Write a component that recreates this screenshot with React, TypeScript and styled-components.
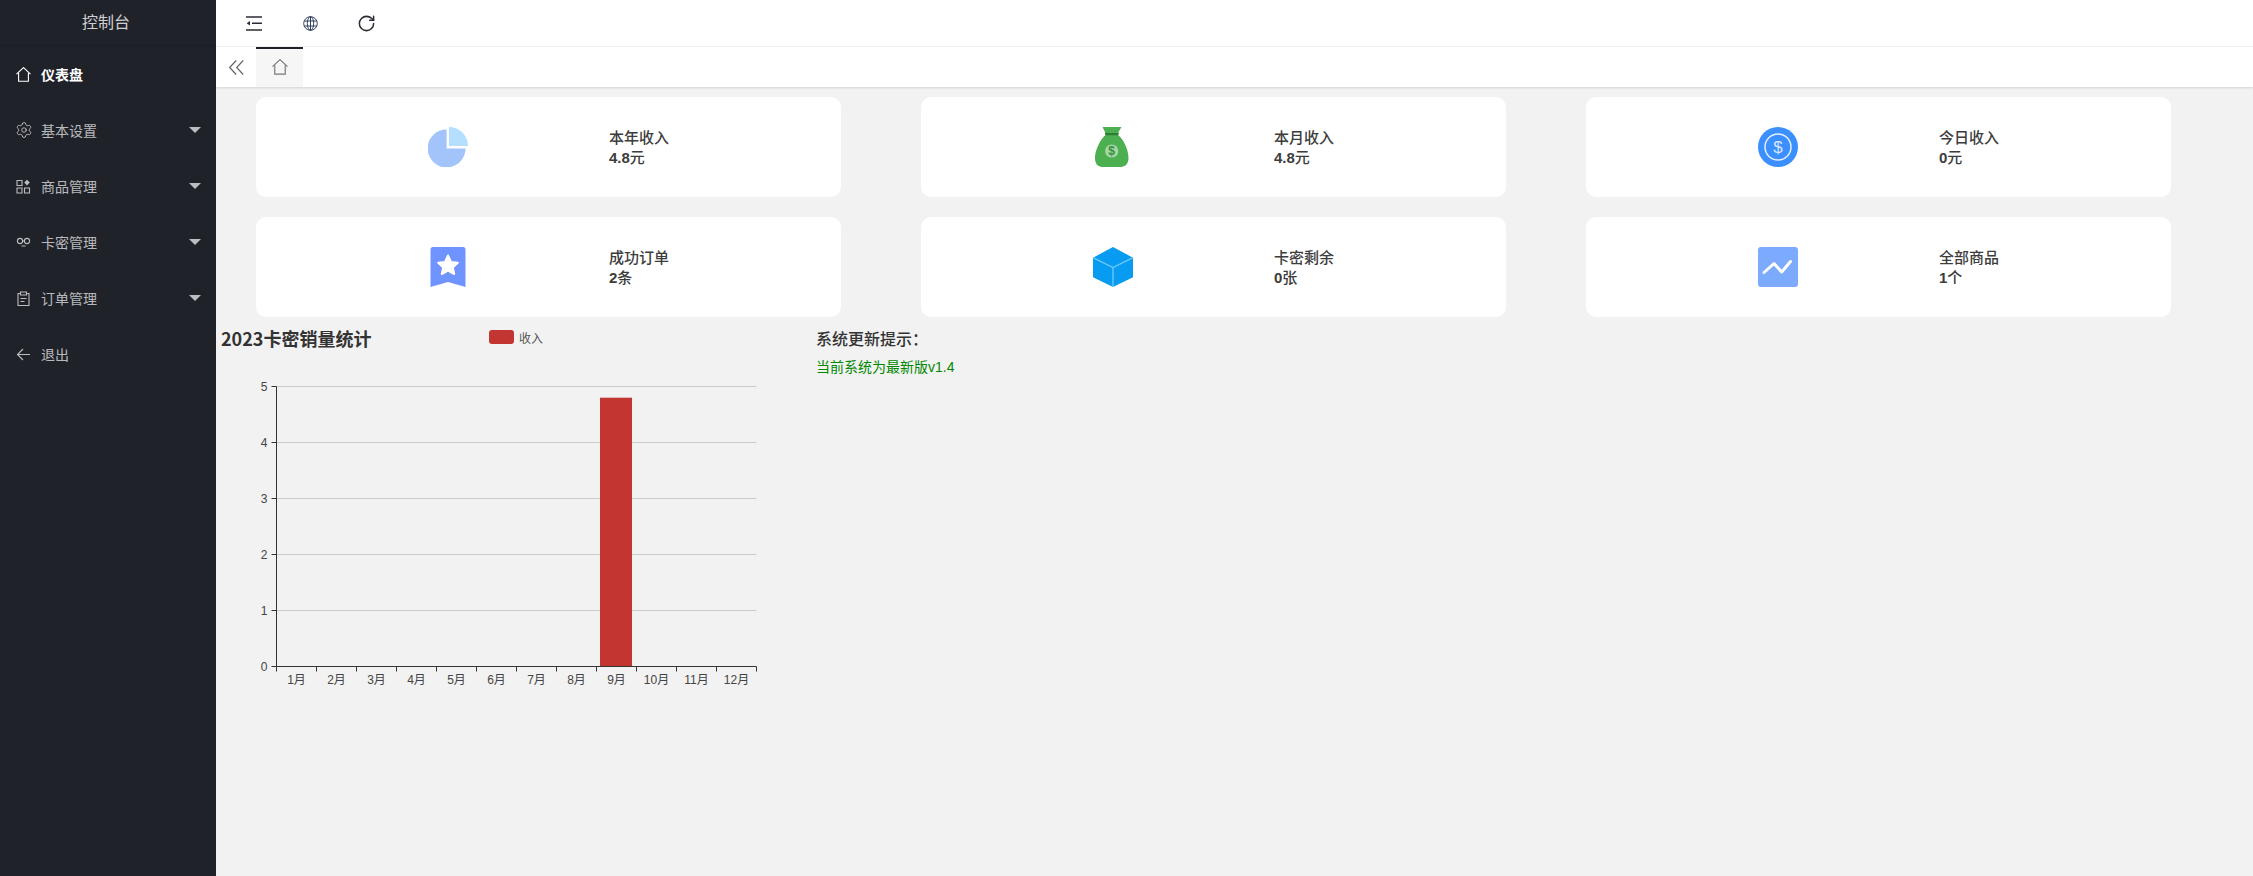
import React from 'react';
import styled, { createGlobalStyle } from 'styled-components';
import { RotateCw, Settings } from 'lucide-react';

const GlobalStyle = createGlobalStyle`
  html, body {
    margin: 0;
    padding: 0;
    height: 100%;
    overflow: hidden;
    background: #f2f2f2;
    font-family: "Liberation Sans", "Noto Sans CJK SC", sans-serif;
  }
`;

const Shell = styled.div`
  display: flex;
  height: 100vh;
`;

const Side = styled.aside`
  flex: 0 0 216px;
  background: #20222a;
`;

const Logo = styled.div`
  height: 46px;
  padding: 0 4px 3px 0;
  box-sizing: border-box;
  border-bottom: 1px solid #1c1e25;
  display: flex;
  align-items: center;
  justify-content: center;
  color: rgba(255, 255, 255, 0.8);
  font-size: 16px;
`;

const Menu = styled.nav`
  display: flex;
  flex-direction: column;
`;

const MenuItem = styled.a<{ $active?: boolean }>`
  height: 56px;
  display: flex;
  align-items: center;
  gap: 10px;
  padding: 0 15px 0 16px;
  color: ${(p) => (p.$active ? '#fff' : 'rgba(255, 255, 255, 0.7)')};
  font-size: 14px;
  font-weight: ${(p) => (p.$active ? 700 : 400)};
`;

const MenuLabel = styled.span`
  flex: 1;
`;

const Caret = styled.i`
  width: 0;
  height: 0;
  border-left: 6px solid transparent;
  border-right: 6px solid transparent;
  border-top: 6px solid rgba(255, 255, 255, 0.7);
`;

const Main = styled.main`
  flex: 1;
  min-width: 0;
  display: flex;
  flex-direction: column;
`;

const TopBar = styled.header`
  height: 46px;
  flex: none;
  padding-left: 10px;
  display: flex;
  align-items: center;
  background: #fff;
  border-bottom: 1px solid #f0f0f0;
`;

const ToolButton = styled.span`
  width: 56px;
  display: flex;
  justify-content: center;
  color: #2b2b33;
`;

const TabBar = styled.div`
  height: 40px;
  flex: none;
  display: flex;
  background: #fff;
  box-shadow: 0 1px 2px rgba(0, 0, 0, 0.12);
`;

const TabArrow = styled.span`
  width: 40px;
  display: flex;
  align-items: center;
  justify-content: center;
  color: #555;
`;

const HomeTab = styled.span`
  width: 47px;
  box-sizing: border-box;
  border-top: 2px solid #20222a;
  display: flex;
  align-items: center;
  justify-content: center;
  padding-bottom: 2px;
  background: #f6f6f6;
  color: #777;

  svg {
    width: 16px;
    height: 16px;
  }
`;

const Content = styled.div`
  flex: 1;
  padding: 10px 0 0 5px;
`;

const CardGrid = styled.div`
  display: grid;
  grid-template-columns: repeat(3, 585px);
  column-gap: 80px;
  row-gap: 20px;
  padding-left: 35px;
`;

const Card = styled.section`
  height: 100px;
  display: flex;
  align-items: center;
  padding-left: 172px;
  background: #fff;
  border-radius: 10px;
`;

const CardIcon = styled.svg`
  width: 40px;
  height: 40px;
  flex: none;
`;

const CardText = styled.div`
  margin-left: 141px;
  padding-top: 2px;
  color: #3c3c3c;
  font-size: 15px;
  font-weight: 500;
  line-height: 20px;
`;

const CardValue = styled.b`
  font-weight: 700;
`;

const LowerRow = styled.div`
  display: flex;
  margin-top: 9px;
`;

const ChartPanel = styled.section`
  width: 595px;
`;

const ChartHead = styled.div`
  display: flex;
  align-items: center;
  height: 24px;
`;

const ChartTitle = styled.h2`
  width: 268px;
  margin: 0;
  color: #333;
  font-family: "Noto Sans CJK SC", sans-serif;
  font-size: 18px;
  font-weight: 700;
`;

const LegendSwatch = styled.i`
  width: 25px;
  height: 14px;
  margin-top: -2px;
  border-radius: 3px;
  background: #c23531;
`;

const LegendText = styled.span`
  margin: -2px 0 0 5px;
  color: #555;
  font-size: 12px;
`;

const ChartSvg = styled.svg`
  display: block;
  width: 560px;
  height: 350px;
  font-size: 12px;
  fill: #444;
`;

const Notice = styled.section`
  color: #333;
`;

const NoticeTitle = styled.h3`
  margin: 0;
  height: 24px;
  font-size: 16px;
  font-weight: 500;
  line-height: 27px;
`;

const NoticeText = styled.p`
  margin: 9px 0 0;
  color: #080;
  font-size: 14px;
  line-height: 16px;
`;

const Line = styled.svg`
  width: 15px;
  height: 15px;
  flex: none;
  fill: none;
  stroke: currentColor;
  stroke-width: 1.1;
`;

const GearIcon = styled(Settings)`
  flex: none;
  margin: 0 -1.5px;
`;

const FoldLine = styled(Line)`
  width: 16px;
  stroke-width: 1.4;
`;

const GlobeLine = styled(Line)`
  color: #33415f;
  stroke-width: 1;
`;

const ChevronLine = styled(Line)`
  color: #666;
  stroke-width: 1.2;
`;

function HomeIcon() {
  return (
    <Line viewBox="0 0 15 15">
      <path d="M.5 7.2 7.5.6l7 6.6M2.6 6v8.2h9.8V6" />
    </Line>
  );
}

function AppsIcon() {
  return (
    <Line viewBox="0 0 15 15">
      <path d="M1 1.5h5v5H1zM1 9h5v5H1zM8.5 9h5v5h-5z" />
      <path d="m11 .8 2.8 2.8L11 6.4 8.2 3.6z" fill="currentColor" stroke="none" />
    </Line>
  );
}

function LinkIcon() {
  return (
    <Line viewBox="0 0 15 15">
      <circle cx="4" cy="6" r="2.6" />
      <circle cx="11" cy="6" r="2.6" />
      <path d="M6.6 6h1.8M5.5 11h4" />
    </Line>
  );
}

function ClipIcon() {
  return (
    <Line viewBox="0 0 15 15">
      <path d="M4.5 2.5H2v12h11v-12h-2.5M4.5 1h6v3h-6zM4.5 7.5h6M4.5 10.5h4" />
    </Line>
  );
}

function BackIcon() {
  return (
    <Line viewBox="0 0 15 15">
      <path d="M14 7.5H1.5M7 2 1.5 7.5 7 13" />
    </Line>
  );
}

function FoldIcon() {
  return (
    <FoldLine viewBox="0 0 16 15">
      <path d="M0 1h16M6 7.3h10M0 14h16" />
      <path d="M4 5v4.6L.6 7.3z" fill="currentColor" stroke="none" />
    </FoldLine>
  );
}

function GlobeIcon() {
  return (
    <GlobeLine viewBox="0 0 15 15">
      <circle cx="7.5" cy="7.5" r="6.8" />
      <ellipse cx="7.5" cy="7.5" rx="3.2" ry="6.8" />
      <path d="M7.5.7v13.6M1.2 5h12.6M1.2 10h12.6" />
    </GlobeLine>
  );
}

function FoldTabsIcon() {
  return (
    <ChevronLine viewBox="0 0 15 15">
      <path d="M7.2.5.7 7.5l6.5 7M14.2.5 7.7 7.5l6.5 7" />
    </ChevronLine>
  );
}

const menu = [
  { label: '仪表盘', icon: <HomeIcon />, active: true },
  { label: '基本设置', icon: <GearIcon size={18} strokeWidth={1.2} />, sub: true },
  { label: '商品管理', icon: <AppsIcon />, sub: true },
  { label: '卡密管理', icon: <LinkIcon />, sub: true },
  { label: '订单管理', icon: <ClipIcon />, sub: true },
  { label: '退出', icon: <BackIcon /> },
];

const PieIcon = (
  <CardIcon viewBox="0 0 40 40">
    <path d="M18.6 2.4A19 19 0 1 0 37.6 21.6H18.6Z" fill="#a2c4fa" />
    <path d="M21 0A19 19 0 0 1 40 19H21Z" fill="#b5dfff" />
  </CardIcon>
);

const BagIcon = (
  <CardIcon viewBox="0 0 40 40">
    <path
      d="M9.5 0H28.5L25.5 5 25 8C31 13 35.5 23 35.5 31 35.5 38 31 40 27 40H10C6 40 2 38 2 31 2 23 7 13 12.5 8L12 5Z"
      fill="#4caf50"
    />
    <path d="M12 6H26L25.2 8.2H12.6Z" fill="#2e7d32" />
    <circle cx="18.7" cy="24" r="6.6" fill="#a5d6a7" />
    <text x="18.7" y="28.2" textAnchor="middle" fontSize="12" fontWeight="700" fill="#388e3c">
      $
    </text>
  </CardIcon>
);

const CoinIcon = (
  <CardIcon viewBox="0 0 40 40">
    <circle cx="20" cy="20" r="20" fill="#3b8ffe" />
    <circle cx="20" cy="20" r="13" fill="none" stroke="#e3eeff" strokeWidth="1.5" />
    <text x="20" y="26" textAnchor="middle" fontSize="17" fill="#d6e6ff">
      $
    </text>
  </CardIcon>
);

const RibbonIcon = (
  <CardIcon viewBox="0 0 40 40">
    <path d="M2.5 2.5A2.5 2.5 0 0 1 5 0H35A2.5 2.5 0 0 1 37.5 2.5V40L20 35 2.5 40Z" fill="#7094ff" />
    <path
      d="M20 8.5 23 15 29.8 15.8 24.8 20.5 26.2 27 20 23.7 13.8 27 15.2 20.5 10.2 15.8 17 15Z"
      fill="#fff"
      stroke="#fff"
      strokeWidth="2"
      strokeLinejoin="round"
    />
  </CardIcon>
);

const CubeIcon = (
  <CardIcon viewBox="0 0 40 40">
    <path d="M20 0 40 10.7V30.3L20 40 0 30.3V10.7Z" fill="#079cf2" />
    <path d="M0.5 10.8 20 20.5 39.5 10.8M20 20.5V40" fill="none" stroke="#6fc9fb" strokeWidth="1.3" />
  </CardIcon>
);

const TrendIcon = (
  <CardIcon viewBox="0 0 40 40">
    <rect width="40" height="40" rx="3" fill="#7cabfe" />
    <path
      d="M6 25.5 16 16.5 23.7 25 32.5 14.5"
      fill="none"
      stroke="#fff"
      strokeWidth="3"
      strokeLinecap="round"
      strokeLinejoin="round"
    />
  </CardIcon>
);

const cards = [
  { label: '本年收入', value: '4.8', unit: '元', icon: PieIcon },
  { label: '本月收入', value: '4.8', unit: '元', icon: BagIcon },
  { label: '今日收入', value: '0', unit: '元', icon: CoinIcon },
  { label: '成功订单', value: '2', unit: '条', icon: RibbonIcon },
  { label: '卡密剩余', value: '0', unit: '张', icon: CubeIcon },
  { label: '全部商品', value: '1', unit: '个', icon: TrendIcon },
];

// chart geometry, same numbers an echarts grid would end up with
const AXIS_X = 55.5;
const AXIS_BOTTOM = 316.5;
const STEP_X = 40;
const STEP_Y = 56;
const sales = [0, 0, 0, 0, 0, 0, 0, 0, 4.8, 0, 0, 0];

function SalesChart() {
  return (
    <ChartSvg viewBox="0 0 560 350">
      {[1, 2, 3, 4, 5].map((n) => (
        <line
          key={n}
          x1={AXIS_X}
          x2={AXIS_X + STEP_X * 12}
          y1={AXIS_BOTTOM - n * STEP_Y}
          y2={AXIS_BOTTOM - n * STEP_Y}
          stroke="#ccc"
        />
      ))}
      {sales.map((v, i) =>
        v > 0 ? (
          <rect
            key={i}
            x={AXIS_X + STEP_X * i + 3.5}
            y={AXIS_BOTTOM - v * STEP_Y}
            width={32}
            height={v * STEP_Y}
            fill="#c23531"
          />
        ) : null,
      )}
      <g stroke="#333">
        <line x1={AXIS_X} x2={AXIS_X} y1={AXIS_BOTTOM - 5 * STEP_Y} y2={AXIS_BOTTOM} />
        <line x1={AXIS_X} x2={AXIS_X + STEP_X * 12} y1={AXIS_BOTTOM} y2={AXIS_BOTTOM} />
        {[0, 1, 2, 3, 4, 5].map((n) => (
          <line key={n} x1={AXIS_X - 5} x2={AXIS_X} y1={AXIS_BOTTOM - n * STEP_Y} y2={AXIS_BOTTOM - n * STEP_Y} />
        ))}
        {Array.from({ length: 13 }, (_, i) => (
          <line key={i} x1={AXIS_X + STEP_X * i} x2={AXIS_X + STEP_X * i} y1={AXIS_BOTTOM} y2={AXIS_BOTTOM + 5} />
        ))}
      </g>
      {[0, 1, 2, 3, 4, 5].map((n) => (
        <text key={n} x={AXIS_X - 9} y={AXIS_BOTTOM - n * STEP_Y + 4} textAnchor="end">
          {n}
        </text>
      ))}
      {sales.map((_, i) => (
        <text key={i} x={AXIS_X + STEP_X * i + 20} y={AXIS_BOTTOM + 17} textAnchor="middle">
          {i + 1}月
        </text>
      ))}
    </ChartSvg>
  );
}

export default function App() {
  return (
    <Shell>
      <GlobalStyle />
      <Side>
        <Logo>控制台</Logo>
        <Menu>
          {menu.map((item) => (
            <MenuItem key={item.label} $active={item.active}>
              {item.icon}
              <MenuLabel>{item.label}</MenuLabel>
              {item.sub && <Caret />}
            </MenuItem>
          ))}
        </Menu>
      </Side>
      <Main>
        <TopBar>
          <ToolButton>
            <FoldIcon />
          </ToolButton>
          <ToolButton>
            <GlobeIcon />
          </ToolButton>
          <ToolButton>
            <RotateCw size={19} strokeWidth={1.9} />
          </ToolButton>
        </TopBar>
        <TabBar>
          <TabArrow>
            <FoldTabsIcon />
          </TabArrow>
          <HomeTab>
            <HomeIcon />
          </HomeTab>
        </TabBar>
        <Content>
          <CardGrid>
            {cards.map((card) => (
              <Card key={card.label}>
                {card.icon}
                <CardText>
                  <div>{card.label}</div>
                  <CardValue>{card.value}</CardValue>
                  {card.unit}
                </CardText>
              </Card>
            ))}
          </CardGrid>
          <LowerRow>
            <ChartPanel>
              <ChartHead>
                <ChartTitle>2023卡密销量统计</ChartTitle>
                <LegendSwatch />
                <LegendText>收入</LegendText>
              </ChartHead>
              <SalesChart />
            </ChartPanel>
            <Notice>
              <NoticeTitle>系统更新提示：</NoticeTitle>
              <NoticeText>当前系统为最新版v1.4</NoticeText>
            </Notice>
          </LowerRow>
        </Content>
      </Main>
    </Shell>
  );
}
